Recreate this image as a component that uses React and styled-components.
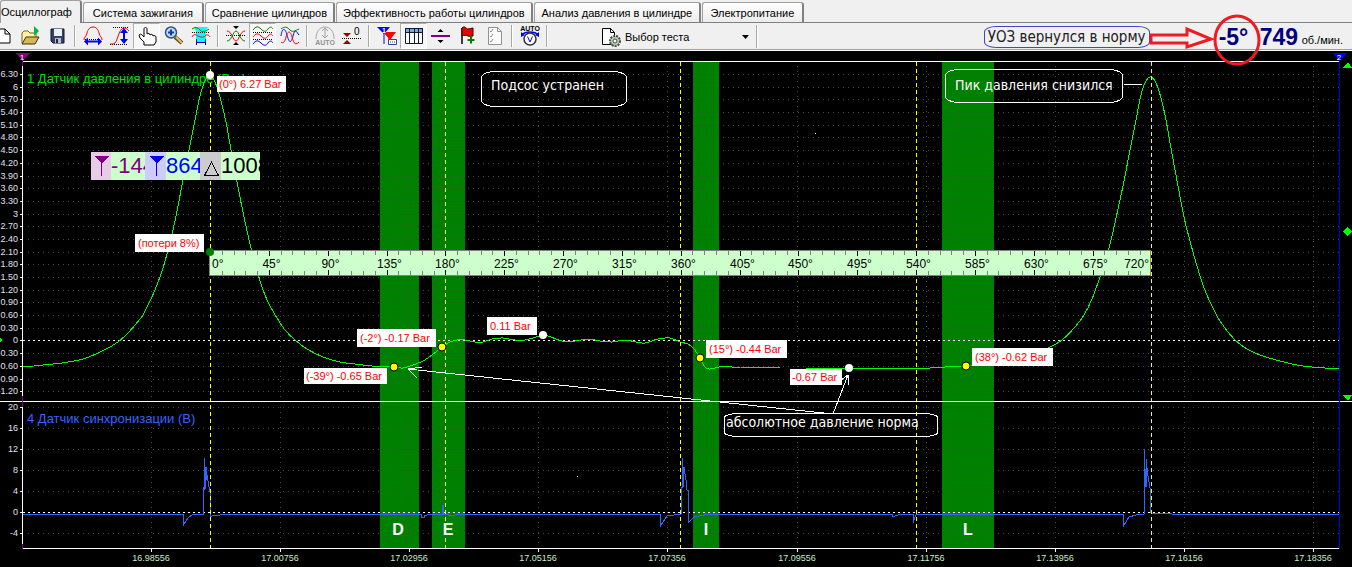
import styled, { createGlobalStyle } from "styled-components";

const GlobalStyle = createGlobalStyle`
  * {
    box-sizing: border-box;
  }

  body {
    margin: 0;
    background-color: #000;
    font-family: "Liberation Sans", Arial, sans-serif;
    overflow-x: hidden;
  }
`;

const Page = styled.div`
  display: flex;
  flex-direction: column;
`;

const TabBar = styled.div`
  display: flex;
  align-items: flex-end;
  gap: 1px;
  height: 23px;
  background-color: #f0f0f0;
  border-bottom: 1px solid #808080;
`;

const Tab = styled.button`
  flex: 0 0 ${({ $width }) => $width}px;
  height: ${({ $active }) => ($active ? 23 : 20)}px;
  margin-bottom: ${({ $active }) => ($active ? -1 : 0)}px;
  padding: ${({ $active }) => ($active ? "0 8px 0 0" : "0")};
  border-style: solid;
  border-width: 1px 2px 0 1px;
  border-color: #a0a0a0 #808080 #808080 #a0a0a0;
  border-radius: 3px 3px 0 0;
  background: ${({ $active }) => ($active ? "#f0f0f0" : "linear-gradient(#fff, #ececec)")};
  font-family: inherit;
  font-size: 11px;
  line-height: 16px;
  color: #000;
  text-align: center;
  white-space: nowrap;
`;

const Toolbar = styled.div`
  display: flex;
  align-items: stretch;
  height: 28px;
  background-color: #f0f0f0;
  border-bottom: 1px solid #fff;
  box-shadow: inset 0 -1px 0 #a0a0a0;
`;

const ToolGroup = styled.div`
  display: flex;
  margin-left: -10px;
  padding-bottom: 1px;
`;

const ToolButton = styled.button`
  width: 27px;
  padding: 0;
  display: flex;
  align-items: center;
  justify-content: center;
  border-style: solid;
  border-width: 1px;
  border-color: ${({ $pressed }) => ($pressed ? "#b0b0b0 #fff #fff #b0b0b0" : "transparent")};
  background-color: ${({ $pressed }) => ($pressed ? "#f8f8f8" : "transparent")};
`;

const Icon = styled.svg`
  flex: none;
  width: 20px;
  height: 20px;
  fill: none;
`;

const Separator = styled.div`
  flex: none;
  width: 2px;
  margin: 2px 3px;
  background-color: #a8a8a8;
  border-right: 1px solid #fff;
`;

const TestPicker = styled.label`
  display: flex;
  align-items: center;
  gap: 4px;
  margin-left: 50px;
`;

const SelectWrap = styled.span`
  display: grid;
  align-items: center;
  justify-items: end;
`;

const TestSelect = styled.select`
  grid-area: 1 / 1;
  width: 128px;
  height: 22px;
  padding: 0;
  border: none;
  appearance: none;
  background: transparent;
  font-family: inherit;
  font-size: 11px;
  color: #000;
`;

const Caret = styled.svg`
  grid-area: 1 / 1;
  width: 7px;
  height: 4px;
  margin-right: 4px;
  pointer-events: none;
`;

const Readout = styled.div`
  position: relative;
  z-index: 1;
  display: flex;
  align-items: center;
  margin-left: auto;
  padding-right: 9px;
`;

const Callout = styled.div`
  width: 166px;
  height: 22px;
  margin-right: 69px;
  border: 1px solid #4048c8;
  border-radius: 12px / 6px;
  font-family: "DejaVu Sans Condensed", "DejaVu Sans", sans-serif;
  font-size: 15px;
  line-height: 20px;
  text-align: center;
  white-space: nowrap;
  color: #202020;
`;

const BigValue = styled.output`
  width: ${({ $width }) => $width}px;
  font-size: 23px;
  line-height: 26px;
  font-weight: bold;
  color: #000080;
`;

const Unit = styled.span`
  padding-top: 6px;
  font-size: 11px;
  line-height: 16px;
  white-space: nowrap;
`;

const Highlight = styled.svg`
  position: absolute;
  right: 88px;
  top: -9px;
  width: 116px;
  height: 52px;
  fill: none;
  stroke: #ed1c24;
  stroke-width: 3;
  pointer-events: none;
`;

const Chart = styled.svg`
  display: block;
  width: 100%;
  height: auto;
  background-color: #000;
  shape-rendering: crispEdges;
`;

const AxisText = styled.text`
  font-size: ${({ $size }) => $size || 9}px;
  fill: ${({ $color }) => $color || "#e0e0ee"};
  text-anchor: ${({ $anchor }) => $anchor || "middle"};
`;

const ChannelName = styled.text`
  font-size: 13px;
  fill: ${({ $color }) => $color};
`;

const BandLetter = styled.text`
  font-size: 16px;
  font-weight: bold;
  fill: #fff;
  text-anchor: middle;
`;

const TagText = styled.text`
  font-size: 11px;
  fill: #f00;
`;

const CursorText = styled.text`
  font-size: 22px;
  fill: ${({ $color }) => $color};
`;

const NoteText = styled.text`
  font-family: "DejaVu Sans Condensed", "DejaVu Sans", sans-serif;
  font-size: 14px;
  fill: #fff;
`;

const tabs = [
    { label: "Осциллограф", width: 80, active: true },
    { label: "Система зажигания", width: 121 },
    { label: "Сравнение цилиндров", width: 130 },
    { label: "Эффективность работы цилиндров", width: 197 },
    { label: "Анализ давления в цилиндре", width: 167 },
    { label: "Электропитание", width: 102 },
];

const wave = (y) => `M0 ${y}c3-4 5-4 8-1s5 3 7 0 4-2 5 0`;

const icons = {
    new: (
        <path d="M1 3h10l5 5v9H1zM11 3v5h5" fill="#fff" stroke="#000" />
    ),
    open: (
        <>
            <path d="M1 17V7l2-2h4l2 2h6v4" fill="#fff3a0" stroke="#7a6420" />
            <path d="M1 18l4-7h13l-4 7z" fill="#d8b850" stroke="#3c3010" />
            <path d="M13 0l5 5-5 5z" fill="#00b83c" />
        </>
    ),
    save: (
        <>
            <path d="M3 3h13v14H5l-2-2z" fill="#3a4068" stroke="#101428" />
            <path d="M6 3h8v7H6z" fill="#e4f0fa" />
            <path d="M7 12h6v5H7z" fill="#b8c0d4" />
            <path d="M8 13h2v4H8z" fill="#20243c" />
        </>
    ),
    period: (
        <>
            <path d="M2 13.500h16" stroke="#000" strokeDasharray="1 1" />
            <path d="M1 14c0-3 2-3 3-7s3-6 6-6 5 2 6 6 3 4 3 7" stroke="#f00" />
            <path d="M4 15.500h12" stroke="#00f" strokeWidth="2" />
            <path d="M1 15.500l4-4v8zM19 15.500l-4-4v8z" fill="#00f" />
        </>
    ),
    amplitude: (
        <>
            <path d="M3 1.500h16M0 18.500h18" stroke="#000" strokeDasharray="1 1" />
            <path d="M0 18h3c5 0 5-16 11-16h1c2 0 2 2 4 3" stroke="#f00" />
            <path d="M14 5v10" stroke="#00f" strokeWidth="2" />
            <path d="M14 2l4 5h-8zM14 18l4-5h-8z" fill="#00f" />
        </>
    ),
    hand: (
        <path
            d="M7 19v-3l-4-4-1-3c1-1 2-1 3 0l2 2V3c0-2 3-2 3 0v5c1-1 3-1 3 1 1-1 3-1 3 1 1-1 3 0 3 1v5l-2 3z"
            fill="#fff"
            stroke="#000"
        />
    ),
    zoom: (
        <>
            <path d="M11 11l7 6" stroke="#5c4a20" strokeWidth="4" />
            <path d="M12 11l6 6" stroke="#e8c060" strokeWidth="2" />
            <circle cx="7" cy="6.500" r="5.500" fill="#b4e0ff" stroke="#3c5078" strokeWidth="1.5" />
            <path d="M4 6.500h6M7 3.500v6" stroke="#1838b0" strokeWidth="2" />
        </>
    ),
    phase: (
        <>
            <path d="M3 1h14l-2 4v12H5V5z" fill="#00ffff" />
            <path d="M1 3c3-2 5-2 8 1s6 1 9-1" stroke="#008000" />
            <path d="M1 6.500h18" stroke="#000" strokeDasharray="1 1" />
            <path d="M1 11c2-4 4-2 6-1s5 2 7 0 4-1 5 1" stroke="#f00" />
            <path d="M5.500 13v6M14.500 13v6M6 16.500h8" stroke="#00a" />
        </>
    ),
    align: (
        <>
            <path d="M0 9.500h20" stroke="#000" strokeDasharray="1 1" />
            <path d="M1 5c5 0 6 10 9 10s4-10 9-10" stroke="#f00" />
            <path d="M1 15c5 0 6-10 9-10s4 10 9 10" stroke="#008000" />
            <path d="M7 0h6l-3 3zM7 19h6l-3-3z" fill="#000" />
        </>
    ),
    separate: (
        <>
            <path d={wave(4)} stroke="#008000" />
            <path d={wave(11)} stroke="#f00" />
            <path d={wave(18)} stroke="#00f" />
            <path d="M0 6.500h20M0 13.500h20" stroke="#000" strokeDasharray="1 1" />
        </>
    ),
    overlay: (
        <>
            <path d="M1 3c4-3 6-2 9 1s6 0 9-1" stroke="#008000" />
            <path d="M1 10c1-8 4-9 6-1s4 9 6 1 3-5 6-1" stroke="#00f" />
            <path d="M1 16c2 2 4 0 5-5s4-8 6 0 4 8 7 5" stroke="#f00" />
        </>
    ),
    autoScale: (
        <>
            <path d="M1 13C1 5 5 1 10 1s9 4 9 12" stroke="#a8a8a8" />
            <path d="M10 3v8M7 5l3-3 3 3M7 9l3 3 3-3" stroke="#a0a0a0" />
            <text x="10" y="19" fontSize="7" fontWeight="bold" textAnchor="middle" fill="#909090">AUTO</text>
        </>
    ),
    zero: (
        <>
            <path d="M0 12.500h20" stroke="#000" strokeDasharray="1 1" />
            <path d="M1 7h8l-4 4zM1 18h8l-4-4z" fill="#900000" />
            <text x="12" y="9" fontSize="10" fill="#000">0</text>
        </>
    ),
    cursors: (
        <>
            <path d="M0 1h13L7 8z" fill="#00f" />
            <path d="M7 6v12" stroke="#00f" />
            <path d="M6 6h13l-6 8z" fill="#f00" />
            <path d="M12 10v7" stroke="#f00" />
            <path d="M11.500 13.500h8v5h-8z" fill="#fff" stroke="#304890" />
            <path d="M13 16h5" stroke="#304890" strokeDasharray="1 1" />
            <text x="5" y="7" fontSize="7" fontWeight="bold" fill="#fff">1</text>
        </>
    ),
    table: (
        <>
            <path d="M1.500 2.500h17v15h-17z" fill="#fff" stroke="#101830" />
            <path d="M1.500 2.500h17v4h-17z" fill="#78a8e0" stroke="#101830" />
            <path d="M5.500 3v15M10.500 3v15M14.500 3v15" stroke="#101830" />
        </>
    ),
    split: (
        <>
            <path d="M0 9h19v2H0z" fill="#800080" />
            <path d="M6.500 6h6l-3-3zM6.500 14h6l-3 3z" fill="#000" />
        </>
    ),
    flag: (
        <>
            <path d="M4 2v16" stroke="#000" strokeWidth="1.5" />
            <path d="M4 2c3-3 4 1 6 1s3-1 5-1v8c-2 0-3 1-5 0s-4-1-6 0z" fill="#e80000" stroke="#400" />
            <path d="M13 10.500v7M9.500 14h7" stroke="#008000" strokeWidth="2" />
        </>
    ),
    checklist: (
        <>
            <path d="M3.500 1.500h9l4 4v13h-13z" fill="#fafafa" stroke="#909090" />
            <path d="M12.500 1.500v4h4M5 5l1 1 2-3M5 10l1 1 2-3M5 15l1 1 2-3" stroke="#909090" />
        </>
    ),
    autoVolt: (
        <>
            <text x="10" y="5" fontSize="7" fontWeight="bold" textAnchor="middle" fill="#000">AUTO</text>
            <path d="M2 9c3-4 13-4 16 0" stroke="#00f" strokeWidth="1.5" />
            <path d="M1 6l4 3-4 2zM19 6l-4 3 4 2z" fill="#00f" />
            <circle cx="10" cy="13" r="6" fill="#fff" stroke="#303030" strokeWidth="1.5" />
            <path d="M7.500 10.500L10 16l2.500-5.500" stroke="#00f" />
        </>
    ),
    test: (
        <>
            <path d="M1.500 1.500h8l4 4v12h-12z" fill="#fff" stroke="#000" />
            <path d="M9.500 1v4.500h4" stroke="#000" />
            <circle cx="14" cy="14" r="5" fill="#c0ccc0" stroke="#405040" strokeWidth="2" strokeDasharray="2 1" />
            <circle cx="14" cy="14" r="2" fill="#fff" stroke="#405040" />
        </>
    ),
};

const tools = [
    { icon: "new", title: "Новый" },
    { icon: "open", title: "Открыть" },
    { icon: "save", title: "Сохранить" },
    null,
    { icon: "period", title: "Период" },
    { icon: "amplitude", title: "Амплитуда" },
    { icon: "hand", title: "Перемещение", pressed: true },
    { icon: "zoom", title: "Увеличить" },
    { icon: "phase", title: "Фаза" },
    null,
    { icon: "align", title: "Выровнять" },
    { icon: "separate", title: "Раздельно", pressed: true },
    { icon: "overlay", title: "Совместно" },
    null,
    { icon: "autoScale", title: "Автомасштаб" },
    { icon: "zero", title: "Ноль" },
    null,
    { icon: "cursors", title: "Маркеры" },
    { icon: "table", title: "Таблица", pressed: true },
    { icon: "split", title: "Разделить" },
    { icon: "flag", title: "Метка" },
    { icon: "checklist", title: "Отчет" },
    null,
    { icon: "autoVolt", title: "Авто" },
    null,
];

const LEFT = 22;
const RIGHT = 1339;

const bands = [
    { x: 380, width: 39, letter: "D", cx: 398 },
    { x: 432, width: 33, letter: "E", cx: 448 },
    { x: 693, width: 26, letter: "I", cx: 706 },
    { x: 942, width: 52, letter: "L", cx: 968 },
];

const barTicks = Array.from({ length: 26 }, (_, i) => {
    const value = 6.3 - i * 0.3;
    const rounded = Math.round(value * 10) / 10;
    return {
        y: Math.round(74 + i * 12.69),
        label: Number.isInteger(rounded) ? String(Math.abs(rounded)) : rounded.toFixed(2),
    };
});

const voltTicks = [20, 16, 12, 8, 4, 0, -4].map((v, i) => ({ y: 407 + i * 21, label: String(v) }));

const times = ["16.98556", "17.00756", "17.02956", "17.05156", "17.07356", "17.09556", "17.11756", "17.13956", "17.16156", "17.18356"]
    .map((label, i) => ({ label, x: Math.round(151 + i * 129.1) }));

const pressure = [
    [23, 366], [34, 366], [43, 365], [62, 363], [83, 359], [100, 352], [115, 344], [126, 335], [135, 325], [143, 315],
    [149, 303], [155, 290], [161, 274], [167, 254], [173, 230], [178, 206], [183, 180], [189, 150], [195, 120],
    [200, 96], [205, 81], [210, 75], [215, 82], [220, 97], [226, 122], [231, 150], [237, 182],
    [244, 217], [251, 248], [258, 274], [263, 290], [269, 304], [277, 318], [285, 330], [295, 340], [307, 349], [323, 357],
    [340, 362], [355, 364], [372, 366], [394, 367], [403, 368], [413, 365], [423, 361], [432, 355], [442, 347], [450, 342],
    [457, 340], [465, 340], [475, 342], [483, 342], [492, 339], [503, 338], [515, 340], [525, 340], [536, 337], [543, 335],
    [551, 337], [562, 341], [575, 341], [588, 339], [600, 341], [612, 342], [625, 340], [636, 342], [645, 343], [658, 339],
    [670, 338], [680, 342], [688, 344], [694, 349], [700, 358], [704, 366], [709, 369], [715, 368], [725, 366], [740, 368],
    [760, 367], [780, 368], [849, 368], [930, 368], [945, 367], [966, 366], [990, 365], [1010, 361], [1030, 356], [1050, 347],
    [1062, 340], [1075, 327], [1084, 315], [1092, 299], [1100, 277], [1106, 259], [1112, 236], [1118, 209], [1124, 181], [1130, 150],
    [1136, 120], [1141, 95], [1146, 81], [1151, 77], [1156, 83], [1161, 98], [1166, 120], [1172, 154], [1178, 186],
    [1184, 217], [1190, 241], [1197, 266], [1203, 285], [1210, 302], [1220, 321], [1234, 339], [1247, 349], [1260, 355],
    [1280, 361], [1297, 365], [1312, 367], [1339, 369],
];

// Catmull-Rom through the samples
const smoothPath = (pts) => {
    let d = `M${pts[0].join(" ")}`;
    for (let i = 0; i < pts.length - 1; i++) {
        const p0 = pts[i - 1] || pts[i];
        const p1 = pts[i];
        const p2 = pts[i + 1];
        const p3 = pts[i + 2] || p2;
        const c1 = [p1[0] + (p2[0] - p0[0]) / 6, p1[1] + (p2[1] - p0[1]) / 6];
        const c2 = [p2[0] - (p3[0] - p1[0]) / 6, p2[1] - (p3[1] - p1[1]) / 6];
        d += `C${c1.join(" ")} ${c2.join(" ")} ${p2.join(" ")}`;
    }
    return d;
};

const sync = `M23 514H183V526L186 521L188 518L192 515L196 514H203V487H204V458L205 490L206 467L207 480V475L209 487V491H210V518L212 516L220 515L222 514
  H421V517H424V516L430 514H442V505H443V514H448V516L462 514
  H660V527L663 522L667 516L674 515L681 514V487H682V458L683 487L684 467L686 480L687 490H688V523L690 521L694 517L704 515L714 514
  H892V517L895 516L901 514H913V523L915 517L916 515L928 514
  H1123V527L1126 522L1129 517L1136 515L1144 514V483H1144V449L1146 487L1146 459L1148 476L1150 488V491L1151 513L1160 513L1172 514H1339`;

const tags = [
    { x: 217, y: 76, width: 69, height: 16, text: "(0°) 6.27 Bar", pad: 2 },
    { x: 135, y: 234, width: 69, height: 18, text: "(потери 8%)", pad: 3 },
    { x: 357, y: 329, width: 79, height: 18, text: "(-2°) -0.17 Bar", pad: 3 },
    { x: 304, y: 368, width: 83, height: 16, text: "(-39°) -0.65 Bar", pad: 2 },
    { x: 487, y: 317, width: 50, height: 18, text: "0.11 Bar", pad: 3 },
    { x: 706, y: 340, width: 81, height: 18, text: "(15°) -0.44 Bar", pad: 3 },
    { x: 790, y: 369, width: 52, height: 16, text: "-0.67 Bar", pad: 2 },
    { x: 972, y: 348, width: 81, height: 18, text: "(38°) -0.62 Bar", pad: 3 },
];

const points = [
    { x: 210, y: 75, color: "#fff" },
    { x: 210, y: 252, color: "#008000" },
    { x: 543, y: 335, color: "#fff" },
    { x: 849, y: 368, color: "#fff" },
    { x: 394, y: 367, color: "#ff0" },
    { x: 442, y: 347, color: "#ff0" },
    { x: 700, y: 358, color: "#ff0" },
    { x: 966, y: 366, color: "#ff0" },
];

const rulerX = (deg) => Math.round(210 + deg * 1.3075) + 0.5;

function DegreeRuler() {
    const ticks = Array.from({ length: 79 }, (_, i) => (i + 1) * 9);
    return (
        <g>
            <rect x="209.500" y="250.500" width="941" height="25" fill="#ccffcc" stroke="#808080" />
            {ticks.map((deg) => {
                const major = deg % 45 === 0;
                const x = rulerX(deg);
                const len = major ? 5 : 4;
                return (
                    <path key={deg} d={`M${x} 251v${len}M${x} 275v${-len}`} stroke={major ? "#000" : "#808080"} />
                );
            })}
            <AxisText x="212" y="268" $size={12} $color="#000" $anchor="start">0°</AxisText>
            {Array.from({ length: 15 }, (_, i) => (i + 1) * 45).map((deg) => (
                <AxisText key={deg} x={rulerX(deg) + 2} y="268" $size={12} $color="#000">{deg}°</AxisText>
            ))}
            <AxisText x="1149" y="268" $size={12} $color="#000" $anchor="end">720°</AxisText>
        </g>
    );
}

function CursorReadout() {
    return (
        <g>
            <rect x="91" y="152" width="169" height="28" fill="#ccffcc" />
            <rect x="91" y="152" width="20" height="28" fill="#e6cce6" />
            <rect x="145" y="152" width="21" height="28" fill="#ccccff" />
            <rect x="200" y="152" width="21" height="28" fill="#cccccc" />
            <path d="M94 156h15l-7 7v13h-1v-13z" fill="#800080" />
            <path d="M149 156h15l-7 7v13h-1v-13z" fill="#00f" />
            <path d="M211.500 162l7 13.500h-14z" fill="none" stroke="#000" />
            <clipPath id="cursor1"><rect x="111" y="152" width="34" height="28" /></clipPath>
            <clipPath id="cursor2"><rect x="166" y="152" width="34" height="28" /></clipPath>
            <clipPath id="cursor3"><rect x="221" y="152" width="39" height="28" /></clipPath>
            <CursorText x="111" y="173" $color="#800080" clipPath="url(#cursor1)">-144</CursorText>
            <CursorText x="166" y="173" $color="#0000ff" clipPath="url(#cursor2)">864</CursorText>
            <CursorText x="221" y="173" $color="#000" clipPath="url(#cursor3)">1008</CursorText>
        </g>
    );
}

function Notes() {
    return (
        <g fill="none" stroke="#fff">
            <rect x="481.500" y="71.500" width="145" height="35" rx="14" ry="6" />
            <rect x="945.500" y="69.500" width="177" height="33" rx="14" ry="6" />
            <rect x="724.500" y="413.500" width="213" height="23" rx="14" ry="4" />
            <path d="M1124 84.500h18" />
            <path d="M833 414L408 369M422 367L408 369L417 378" />
            <path d="M833 414L848 375M841 380L848 375L849 385" />
            <g stroke="none">
                <NoteText x="491" y="90">Подсос устранен</NoteText>
                <NoteText x="955" y="90">Пик давления снизился</NoteText>
                <NoteText x="726" y="427">абсолютное давление норма</NoteText>
            </g>
        </g>
    );
}

function ScopeChart() {
    return (
        <Chart viewBox="0 51 1352 516" role="img" aria-label="Осциллограмма">
            {bands.map((b) => (
                <rect key={b.letter} x={b.x} y="62" width={b.width} height="486" fill="#008000" />
            ))}

            <g stroke="#484848" strokeDasharray="1 4">
                {[...barTicks, ...voltTicks].filter((t) => t.label !== "0").map((t) => (
                    <path key={t.y} d={`M${LEFT + 6} ${t.y + 0.5}H${RIGHT}`} />
                ))}
                {times.map((t) => (
                    <path key={t.label} d={`M${t.x + 0.5} 66V397M${t.x + 0.5} 407V546`} />
                ))}
            </g>
            <path d="M23 340.500H1339M23 512.500H1339" stroke="#fff" strokeDasharray="2 3" />

            <ChannelName x="27" y="83" $color="#00e000">1 Датчик давления в цилиндре (Bar)</ChannelName>
            <ChannelName x="27" y="423" $color="#3366ff">4 Датчик синхронизации (В)</ChannelName>

            <path d={smoothPath(pressure)} fill="none" stroke="#00ff00" />
            <path d={sync} fill="none" stroke="#3366ff" />

            <path
                d="M210.500 62V548M445.500 62V548M680.500 62V548M916.500 62V548M1151.500 62V548"
                stroke="#ffff00"
                strokeDasharray="4 3"
            />

            <path d="M22 61.500H1339M0 401.500H1352M22 548.500H1339M22.500 61V396M22.500 407V544" stroke="#fff" />
            <path d="M22.500 59V66M22.500 396V407M22.500 544V549" stroke="#800080" />
            <path d="M1339.500 58V549" stroke="#0000e0" />
            {[...barTicks, ...voltTicks].map((t) => (
                <g key={t.y}>
                    <path d={`M20 ${t.y + 0.5}h3`} stroke="#fff" />
                    <AxisText x="18" y={t.y + 3} $anchor="end">{t.label}</AxisText>
                </g>
            ))}
            {times.map((t) => (
                <g key={t.label}>
                    <path d={`M${t.x + 0.5} 549v3`} stroke="#fff" />
                    <AxisText x={t.x} y="561" $color="#c8ecc8">{t.label}</AxisText>
                </g>
            ))}

            {bands.map((b) => (
                <BandLetter key={b.letter} x={b.cx} y="535">{b.letter}</BandLetter>
            ))}

            <path d="M15 53h15l-7 7h-1z" fill="#800080" />
            <AxisText x="22" y="60" $size={8} $color="#fff">1</AxisText>
            <path d="M1332 53h15l-7 7h-1z" fill="#0000ff" />
            <AxisText x="1339" y="60" $size={8} $color="#fff">2</AxisText>
            <g fill="#00ff00">
                <path d="M1343 68h9l-4-6z" />
                <path d="M1343 231l4-4 5 4-5 5z" />
                <path d="M1343 395h9l-4 6z" />
                <path d="M0 338l2 2-2 2z" />
            </g>
            <path d="M815 133h1v1h-1zM577 476h1v1h-1z" fill="#fff" />

            <DegreeRuler />
            <CursorReadout />

            {tags.map((t) => (
                <g key={t.text}>
                    <rect x={t.x} y={t.y} width={t.width} height={t.height} fill="#fff" />
                    <TagText x={t.x + t.pad} y={t.y + (t.height === 18 ? 13 : 12)}>{t.text}</TagText>
                </g>
            ))}
            {points.map((p) => (
                <circle
                    key={`${p.x}-${p.y}`}
                    cx={p.x}
                    cy={p.y}
                    r="4"
                    fill={p.color}
                    stroke={p.color === "#ff0" ? "#000" : "none"}
                    shapeRendering="auto"
                />
            ))}
            <Notes />
        </Chart>
    );
}

function App() {
    return (
        <Page>
            <GlobalStyle />
            <TabBar role="tablist">
                {tabs.map((tab) => (
                    <Tab key={tab.label} role="tab" aria-selected={!!tab.active} $width={tab.width} $active={tab.active}>
                        {tab.label}
                    </Tab>
                ))}
            </TabBar>
            <Toolbar>
                <ToolGroup>
                    {tools.map((tool, i) =>
                        tool ? (
                            <ToolButton key={tool.icon} aria-label={tool.title} $pressed={tool.pressed}>
                                <Icon viewBox="0 0 20 20">{icons[tool.icon]}</Icon>
                            </ToolButton>
                        ) : (
                            <Separator key={i} />
                        )
                    )}
                </ToolGroup>
                <TestPicker>
                    <Icon viewBox="0 0 20 20">{icons.test}</Icon>
                    <SelectWrap>
                        <TestSelect aria-label="Выбор теста">
                            <option>Выбор теста</option>
                        </TestSelect>
                        <Caret viewBox="0 0 7 4">
                            <path d="M0 0h7L3.500 4z" />
                        </Caret>
                    </SelectWrap>
                </TestPicker>
                <Separator />
                <Readout>
                    <Callout>УОЗ вернулся в норму</Callout>
                    <BigValue $width={41}>-5°</BigValue>
                    <BigValue $width={42}>749</BigValue>
                    <Unit>об./мин.</Unit>
                    <Highlight viewBox="0 0 116 52">
                        <path d="M3 21h36v-6l24 10-24 8v-4H3z" />
                        <ellipse cx="89" cy="26" rx="22" ry="24" />
                    </Highlight>
                </Readout>
            </Toolbar>
            <ScopeChart />
        </Page>
    );
}

export default App;
